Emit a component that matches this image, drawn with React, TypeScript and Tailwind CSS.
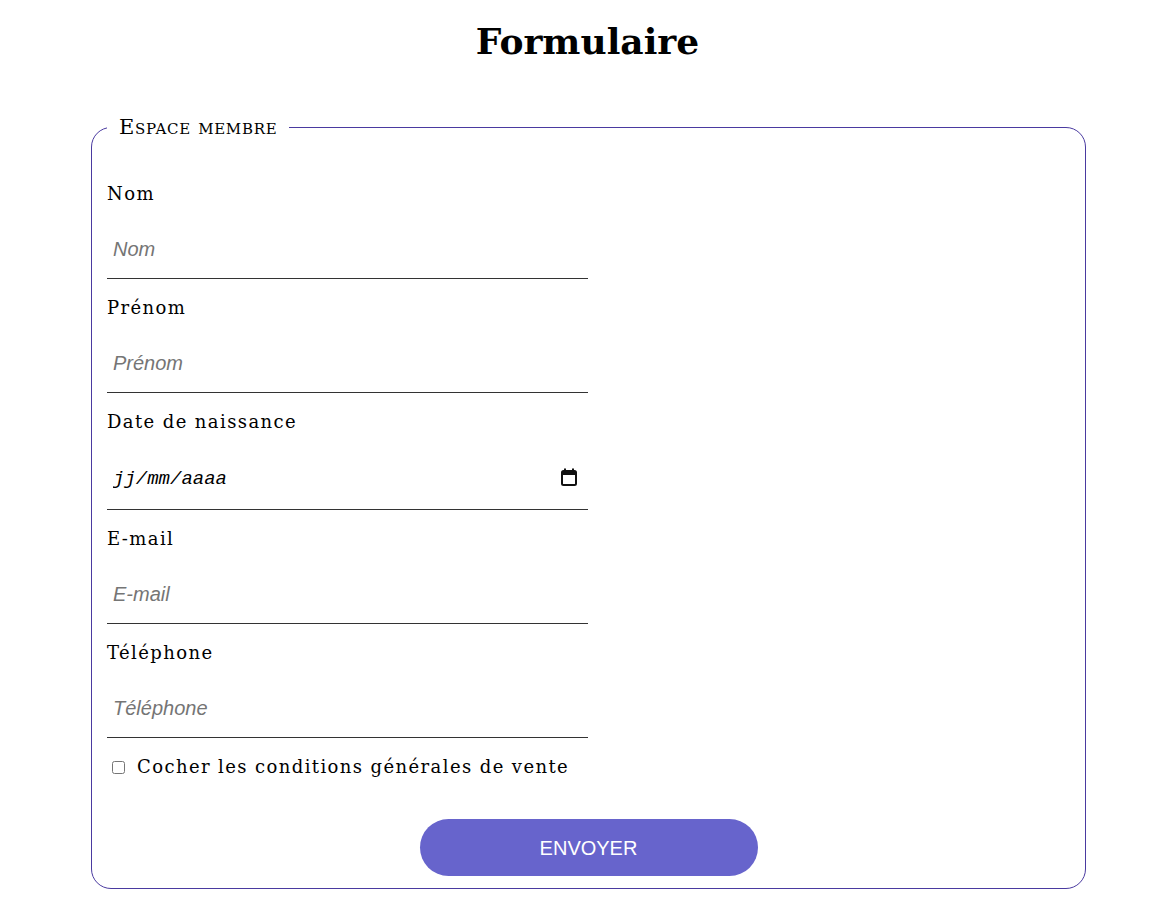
import React from "react";

const serif = { fontFamily: '"DejaVu Serif", "Liberation Serif", serif' };
const sans = { fontFamily: '"Liberation Sans", Arial, sans-serif' };

const fields = [
  { id: "nom", label: "Nom", type: "text" },
  { id: "prenom", label: "Prénom", type: "text" },
  { id: "naissance", label: "Date de naissance", type: "date" },
  { id: "email", label: "E-mail", type: "email" },
  { id: "tel", label: "Téléphone", type: "tel" },
];

const CalendarIcon = () => (
  <svg width="16" height="18" viewBox="0 0 16 18" fill="none">
    <rect x="1" y="3" width="14" height="14" rx="1.5" stroke="#111" strokeWidth="2" />
    <rect x="1" y="3" width="14" height="4" fill="#111" />
    <rect x="3" y="0.5" width="2" height="3" fill="#111" />
    <rect x="11" y="0.5" width="2" height="3" fill="#111" />
  </svg>
);

export default function App() {
  return (
    <div className="min-h-screen bg-white text-black" style={serif}>
      <h1 className="mt-[17px] mb-[50px] pl-[4px] text-center text-[36px] font-bold leading-[48px]">
        Formulaire
      </h1>
      <fieldset className="ml-[91px] w-[995px] rounded-[20px] border border-[#4a3aa0] px-[15px] pt-[43px] pb-[12px]">
        <legend className="px-3 text-[21px] leading-6 tracking-[0.7px] [font-variant:small-caps]">
          Espace membre
        </legend>
        {fields.map((f) => (
          <div key={f.id} className="mb-[17px]">
            <label htmlFor={f.id} className="block text-[18px] leading-6 tracking-[1.4px]">
              {f.label}
            </label>
            {f.type === "date" ? (
              <div className="relative mt-[14px] w-[481px]">
                <input
                  id={f.id}
                  type="text"
                  placeholder="jj/mm/aaaa"
                  className="block h-[62px] w-full border-b border-[#333] px-[6px] text-[19px] italic outline-none placeholder:text-black"
                  style={{ fontFamily: '"Liberation Mono", "DejaVu Sans Mono", monospace' }}
                />
                <span className="pointer-events-none absolute right-[11px] top-[20px]">
                  <CalendarIcon />
                </span>
              </div>
            ) : (
              <input
                id={f.id}
                type={f.type}
                placeholder={f.label}
                className="mt-[14px] block h-[59px] w-[481px] border-b border-[#333] px-[6px] text-[20px] italic outline-none placeholder:text-[#757575]"
                style={sans}
              />
            )}
          </div>
        ))}
        <div className="mt-[3px] flex items-center text-[18px] leading-6 tracking-[1.4px]">
          <input
            type="checkbox"
            id="cgv"
            className="ml-[5px] mr-[12px] h-[13px] w-[13px]"
          />
          <label htmlFor="cgv">Cocher les conditions générales de vente</label>
        </div>
        <div className="mt-[40px] flex justify-center">
          <button
            type="submit"
            className="h-[57px] w-[338px] rounded-full bg-[#6764cc] text-[20px] text-white"
            style={sans}
          >
            ENVOYER
          </button>
        </div>
      </fieldset>
    </div>
  );
}
